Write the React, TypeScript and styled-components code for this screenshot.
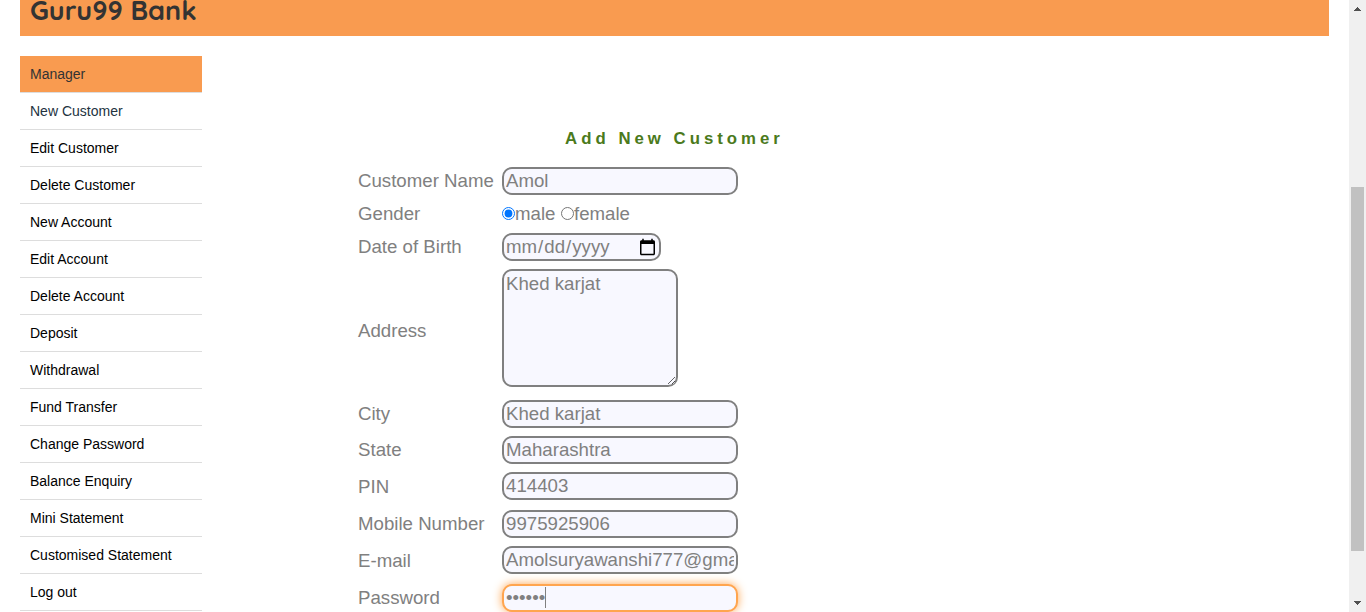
import React from "react";
import styled, { createGlobalStyle, css } from "styled-components";

const GlobalStyle = createGlobalStyle`
  * { box-sizing: border-box; }
  body {
    margin: 0;
    overflow: hidden;
    background: #fff;
    font-family: Arial, "Liberation Sans", sans-serif;
  }
`;

const Viewport = styled.div`
  display: flex;
  width: 1366px;
  height: 612px;
  overflow: hidden;
`;

const Page = styled.div`
  flex: 1;
  padding: 0 20px;
  overflow: hidden;
`;

const Banner = styled.header`
  height: 36px;
  padding-left: 10px;
  background: #f99b50;
`;

const BankName = styled.h2`
  margin: 0;
  color: #333;
  font: 700 27px/21px Quicksand, Lato, sans-serif;
  white-space: nowrap;
`;

const Columns = styled.div`
  display: flex;
  padding-top: 20px;
`;

const Menu = styled.ul`
  width: 182px;
  margin: 0;
  padding: 0;
  list-style: none;
`;

const MenuItem = styled.li<{ $tone?: "active" | "muted" }>`
  height: 37px;
  padding-left: 10px;
  border-bottom: 1px solid #ddd;
  color: ${(p) => (p.$tone === "active" ? "#333" : p.$tone === "muted" ? "#23333f" : "#000")};
  background: ${(p) => (p.$tone === "active" ? "#f99b50" : "#fff")};
  font-size: 14px;
  line-height: 36px;
  white-space: nowrap;
`;

const Form = styled.form`
  width: 632px;
  margin-left: 156px;
  padding-top: 73px;
  color: gray;
  font-size: 18.667px;
`;

const FormTitle = styled.p`
  margin: 0 0 18px;
  padding-left: 1px;
  color: #4b7a1c;
  font-size: 16.8px;
  font-weight: bold;
  line-height: 20px;
  letter-spacing: 4px;
  text-align: center;
`;

const Row = styled.div<{ $gap?: number }>`
  display: grid;
  grid-template-columns: 144px auto;
  align-items: center;
  justify-content: start;
  margin-bottom: ${(p) => p.$gap ?? 8}px;
`;

const Label = styled.label<{ $drop?: number }>`
  padding-top: ${(p) => p.$drop ?? 0}px;
  line-height: 24px;
  white-space: nowrap;
`;

const fieldStyle = css`
  margin: 0;
  border: 2px solid gray;
  border-radius: 10px;
  outline: none;
  background: #f8f8ff;
  color: gray;
  font-family: Arial, "Liberation Sans", sans-serif;
  font-size: 18.667px;
`;

const TextField = styled.input<{ $width?: number; $focused?: boolean }>`
  ${fieldStyle}
  display: block;
  width: ${(p) => p.$width ?? 236}px;
  height: 28px;
  padding: 1px 2px;
  ${(p) =>
    p.$focused &&
    css`
      border-color: #ffa54f;
      box-shadow: 0 0 10px #ffa54f;
    `}
`;

const DateField = styled(TextField)`
  padding: 1px 0 1px 1px;
`;

const AddressField = styled.textarea`
  ${fieldStyle}
  display: block;
  width: 176px;
  height: 118px;
  padding: 2px;
  line-height: 21px;
  resize: both;
`;

const RadioGroup = styled.div`
  display: flex;
  align-items: center;
  height: 22px;
`;

const Radio = styled.input`
  width: 13px;
  height: 13px;
  margin: 0 0 2px;
`;

const RadioText = styled.span`
  width: 46px;
  line-height: 22px;
`;

const CaretHolder = styled.div`
  position: relative;
`;

const Caret = styled.span`
  position: absolute;
  top: 3px;
  left: 43px;
  width: 1px;
  height: 21px;
  background: gray;
`;

const ScrollTrack = styled.div`
  display: flex;
  flex-direction: column;
  align-items: center;
  justify-content: space-between;
  width: 17px;
  padding: 7px 0;
  background: #f0f0f0;
`;

const ScrollThumb = styled.div`
  width: 13px;
  height: 364px;
  margin-top: 126px;
  background: #c1c1c1;
`;

const ScrollArrow = styled.svg`
  display: block;
  width: 7px;
  height: 4px;
  fill: #505050;
`;

type Tone = "active" | "muted";
const menu: { text: string; tone?: Tone }[] = [
  { text: "Manager", tone: "active" },
  { text: "New Customer", tone: "muted" },
  { text: "Edit Customer" },
  { text: "Delete Customer" },
  { text: "New Account" },
  { text: "Edit Account" },
  { text: "Delete Account" },
  { text: "Deposit" },
  { text: "Withdrawal" },
  { text: "Fund Transfer" },
  { text: "Change Password" },
  { text: "Balance Enquiry" },
  { text: "Mini Statement" },
  { text: "Customised Statement" },
  { text: "Log out" },
];

const contactFields = [
  { label: "City", value: "Khed karjat", gap: 8, drop: 0 },
  { label: "State", value: "Maharashtra", gap: 8, drop: 0 },
  { label: "PIN", value: "414403", gap: 10, drop: 2 },
  { label: "Mobile Number", value: "9975925906", gap: 8, drop: 0 },
  { label: "E-mail", value: "Amolsuryawanshi777@gmail.com", gap: 10, drop: 2 },
];

export default function App() {
  return (
    <>
      <GlobalStyle />
      <Viewport>
        <Page>
          <Banner>
            <BankName>Guru99 Bank</BankName>
          </Banner>
          <Columns>
            <Menu>
              {menu.map((m) => (
                <MenuItem key={m.text} $tone={m.tone}>
                  {m.text}
                </MenuItem>
              ))}
            </Menu>
            <Form>
              <FormTitle>Add New Customer</FormTitle>
              <Row $gap={7}>
                <Label>Customer Name</Label>
                <TextField defaultValue="Amol" />
              </Row>
              <Row $gap={7}>
                <Label>Gender</Label>
                <RadioGroup>
                  <Radio type="radio" name="gender" defaultChecked />
                  <RadioText>male</RadioText>
                  <Radio type="radio" name="gender" />
                  <RadioText>female</RadioText>
                </RadioGroup>
              </Row>
              <Row>
                <Label>Date of Birth</Label>
                <DateField type="date" $width={159} />
              </Row>
              <Row $gap={13}>
                <Label $drop={6}>Address</Label>
                <AddressField defaultValue="Khed karjat" />
              </Row>
              {contactFields.map((f) => (
                <Row key={f.label} $gap={f.gap}>
                  <Label $drop={f.drop}>{f.label}</Label>
                  <TextField defaultValue={f.value} />
                </Row>
              ))}
              <Row>
                <Label>Password</Label>
                <CaretHolder>
                  <TextField type="password" defaultValue="123456" $focused />
                  <Caret />
                </CaretHolder>
              </Row>
            </Form>
          </Columns>
        </Page>
        <ScrollTrack>
          <ScrollArrow viewBox="0 0 7 4" shapeRendering="crispEdges">
            <path d="M3 0h1v1h1v1h1v1h1v1H0V3h1V2h1V1h1z" />
          </ScrollArrow>
          <ScrollThumb />
          <ScrollArrow viewBox="0 0 7 4" shapeRendering="crispEdges">
            <path d="M0 0h7v1H6v1H5v1H4v1H3V3H2V2H1V1H0z" />
          </ScrollArrow>
        </ScrollTrack>
      </Viewport>
    </>
  );
}
